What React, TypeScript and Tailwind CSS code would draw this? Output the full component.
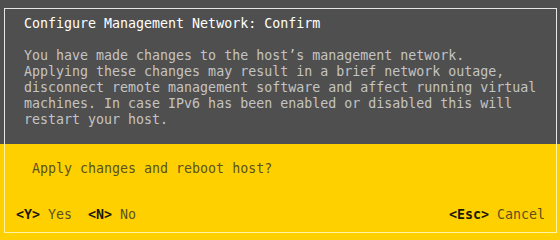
export default function App() {
    return (
        <div
            className="flex h-[240px] w-[560px] flex-col text-[13.3px] leading-[16px]"
            style={{ fontFamily: '"DejaVu Sans Mono", "Liberation Mono", monospace' }}
        >
            {/* gray info area */}
            <div className="h-[144px] bg-[#4f4f4f] pl-[4px] pr-[3px] pt-[8px]">
                <div className="h-full border-x border-t border-[#e6e6e6] pl-[19px] pt-[7px]">
                    <h1 className="whitespace-pre text-white">Configure Management Network: Confirm</h1>
                    <div className="mt-[16px] whitespace-pre text-[#c4c4c4]">
                        <p>You have made changes to the host’s management network.</p>
                        <p>Applying these changes may result in a brief network outage,</p>
                        <p>disconnect remote management software and affect running virtual</p>
                        <p>machines. In case IPv6 has been enabled or disabled this will</p>
                        <p>restart your host.</p>
                    </div>
                </div>
            </div>
            {/* yellow confirm area */}
            <div className="h-[96px] bg-[#ffd000] pb-[7px] pl-[4px] pr-[3px]">
                <div className="flex h-full flex-col justify-between border-x border-b border-[#fff3a6] pb-[9px] pl-[11px] pr-[11px] pt-[17px]">
                    <p className="whitespace-pre pl-[16px] text-[#5b5220]">Apply changes and reboot host?</p>
                    <div className="flex items-center justify-between whitespace-pre">
                        <div className="flex">
                            <span className="font-bold text-[#1b1800]">&lt;Y&gt;</span>
                            <span className="text-[#5b5220]"> Yes  </span>
                            <span className="font-bold text-[#1b1800]">&lt;N&gt;</span>
                            <span className="text-[#5b5220]"> No</span>
                        </div>
                        <div className="flex">
                            <span className="font-bold text-[#1b1800]">&lt;Esc&gt;</span>
                            <span className="text-[#5b5220]"> Cancel</span>
                        </div>
                    </div>
                </div>
            </div>
        </div>
    )
}
